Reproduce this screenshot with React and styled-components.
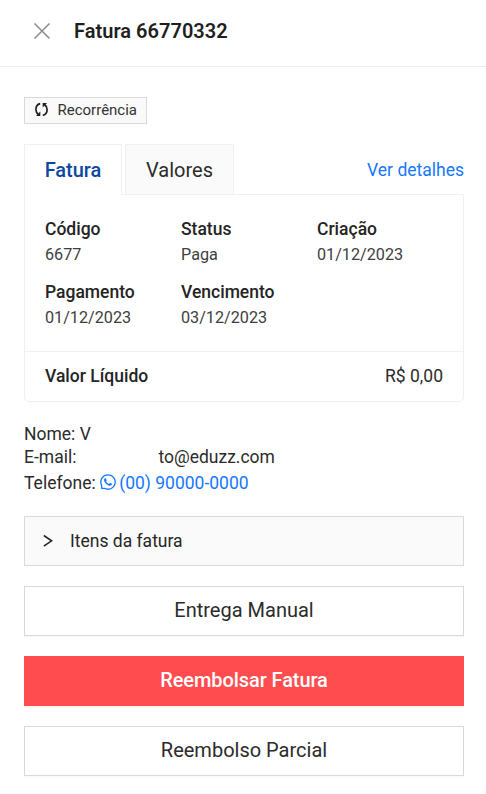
import React from 'react';
import styled, { createGlobalStyle } from 'styled-components';
import { AiOutlineWhatsApp } from 'react-icons/ai';

const GlobalStyle = createGlobalStyle`
  * { box-sizing: border-box; }
  body {
    margin: 0;
    background: #fff;
    color: #2b2b2b;
    font-family: Roboto, sans-serif;
    font-size: 17.5px;
    font-weight: 370;
    line-height: 23px;
  }
`;

const Drawer = styled.div`
  height: 794px;
  display: flex;
  flex-direction: column;
  overflow: hidden;
`;

const Header = styled.header`
  height: 67px;
  padding: 0 33px 4px;
  display: flex;
  align-items: center;
  gap: 23px;
  border-bottom: 1px solid #f0f0f0;
`;

const CloseButton = styled.button`
  display: flex;
  padding: 0;
  border: 0;
  background: none;
  color: #8c8c8c;
`;

const Title = styled.h1`
  margin: 0;
  color: #1f1f1f;
  font-size: 20px;
  font-weight: 600;
  line-height: 30px;
  letter-spacing: 0.03px;
`;

const Body = styled.main`
  padding: 30px 22px 0 24px;
  display: flex;
  flex-direction: column;
  align-items: stretch;
`;

const Tag = styled.span`
  align-self: flex-start;
  width: 123px;
  height: 27px;
  padding: 0 7px;
  display: flex;
  align-items: center;
  gap: 6.500px;
  border: 1px solid #d9d9d9;
  background: #fafafa;
  font-size: 15px;

  svg {
    margin-bottom: 2px;
    color: #1f1f1f;
  }
`;

const TagText = styled.span`
  color: #333;
`;

const Tabs = styled.nav`
  margin-top: 20px;
  height: 50px;
  display: flex;
  gap: 3px;
`;

const Tab = styled.button`
  width: ${(p) => p.$width}px;
  height: ${(p) => (p.$active ? 51 : 50)}px;
  padding: ${(p) => (p.$active ? '0 0 1px' : '1px 0 0')};
  border: 1px solid #f0f0f0;
  border-bottom: 0;
  background: ${(p) => (p.$active ? '#fff' : '#fafafa')};
  color: ${(p) => (p.$active ? '#0d47a1' : '#2b2b2b')};
  font: ${(p) => (p.$active ? 500 : 370)} 20px/30px Roboto, sans-serif;
  z-index: 1;
`;

const DetailsLink = styled.a`
  margin-left: auto;
  padding-top: 2px;
  align-self: center;
  color: #1677ff;
`;

const Card = styled.section`
  height: 208px;
  border: 1px solid #f0f0f0;
  border-radius: 0 0 5px 5px;
  display: flex;
  flex-direction: column;
`;

const Fields = styled.dl`
  margin: 0;
  flex: 1;
  padding: 22px 0 0 20px;
  display: grid;
  grid-template-columns: repeat(3, 136px);
  grid-auto-rows: 63px;
`;

const Label = styled.dt`
  color: #242424;
  font-weight: 500;
  line-height: 24px;
`;

const Value = styled.dd`
  margin: 0;
  font-size: 16.2px;
  line-height: 27px;
  color: #404040;
`;

const Total = styled.div`
  height: 50px;
  padding: 0 20px 1px;
  display: flex;
  justify-content: space-between;
  align-items: center;
  border-top: 1px solid #f0f0f0;
`;

const Strong = styled.span`
  color: #242424;
  font-weight: 500;
`;

const Contact = styled.div`
  margin-top: 21px;
  height: 73px;
`;

const Line = styled.div`
  height: ${(p) => p.$height || 23}px;
  display: flex;
  align-items: center;
`;

const Email = styled.span`
  margin-left: 82px;
`;

const Phone = styled.a`
  margin-left: 3px;
  display: flex;
  align-items: center;
  gap: 2.500px;
  color: #1677ff;

  svg { margin-bottom: 2px; }
`;

const Collapse = styled.button`
  margin-top: 20px;
  height: 50px;
  padding: 0 17px;
  display: flex;
  align-items: center;
  gap: 17px;
  border: 1px solid #d9d9d9;
  background: #fafafa;
  color: #262626;
  font: 370 17.5px/23px Roboto, sans-serif;
`;

const Action = styled.button`
  margin-top: 20px;
  height: 50px;
  padding: 0 0 2px;
  border: 1px solid ${(p) => (p.$danger ? '#ff4d4f' : '#d9d9d9')};
  background: ${(p) => (p.$danger ? '#ff4d4f' : '#fff')};
  color: ${(p) => (p.$danger ? '#fff' : '#2b2b2b')};
  box-shadow: 0 2px 0 ${(p) => (p.$danger ? 'rgba(255, 38, 5, 0.04)' : 'rgba(0, 0, 0, 0.02)')};
  font: ${(p) => (p.$danger ? 500 : 370)} 20px/30px Roboto, sans-serif;
  letter-spacing: ${(p) => (p.$danger ? '-0.08px' : '0')};
`;

const CloseIcon = () => (
  <svg width="18" height="18" viewBox="0 0 18 18" fill="none" stroke="currentColor" strokeWidth="1.5">
    <path d="M1.5 1.5 16.500 16.500M16.500 1.500 1.500 16.500" />
  </svg>
);

const ChevronIcon = () => (
  <svg width="11" height="14" viewBox="0 0 11 14" fill="none" stroke="currentColor" strokeWidth="1.600">
    <path d="M1.800 1.500 9.600 6.800 1.800 12.100" />
  </svg>
);

const SyncIcon = () => (
  <svg width="19" height="19" viewBox="0 0 19 19">
    <g fill="none" stroke="currentColor" strokeWidth="1.700">
      <path d="M8.200 3.600C5.300 4.300 3.900 6.700 3.900 9.500c0 2 .9 3.700 2.500 5" />
      <path d="M10.800 15.400c2.900-.7 4.300-3.100 4.300-5.900 0-2-.9-3.700-2.500-5" />
    </g>
    <g fill="currentColor">
      <path d="M4 15.900h4.300v-4.400z" />
      <path d="M15 3.100h-4.300v4.400z" />
    </g>
  </svg>
);

const fields = [
  ['Código', '6677'],
  ['Status', 'Paga'],
  ['Criação', '01/12/2023'],
  ['Pagamento', '01/12/2023'],
  ['Vencimento', '03/12/2023'],
];

export default function App() {
  return (
    <Drawer>
      <GlobalStyle />
      <Header>
        <CloseButton aria-label="Fechar"><CloseIcon /></CloseButton>
        <Title>Fatura 66770332</Title>
      </Header>
      <Body>
        <Tag><SyncIcon /><TagText>Recorrência</TagText></Tag>
        <Tabs>
          <Tab $active $width={98}>Fatura</Tab>
          <Tab $width={109}>Valores</Tab>
          <DetailsLink>Ver detalhes</DetailsLink>
        </Tabs>
        <Card>
          <Fields>
            {fields.map(([label, value]) => (
              <div key={label}>
                <Label>{label}</Label>
                <Value>{value}</Value>
              </div>
            ))}
          </Fields>
          <Total>
            <Strong>Valor Líquido</Strong>
            <span>R$ 0,00</span>
          </Total>
        </Card>
        <Contact>
          <Line>Nome: V</Line>
          <Line>E-mail:<Email>to@eduzz.com</Email></Line>
          <Line $height={28}>
            Telefone:
            <Phone><AiOutlineWhatsApp size={18} />(00) 90000-0000</Phone>
          </Line>
        </Contact>
        <Collapse><ChevronIcon />Itens da fatura</Collapse>
        <Action>Entrega Manual</Action>
        <Action $danger>Reembolsar Fatura</Action>
        <Action>Reembolso Parcial</Action>
      </Body>
    </Drawer>
  );
}
